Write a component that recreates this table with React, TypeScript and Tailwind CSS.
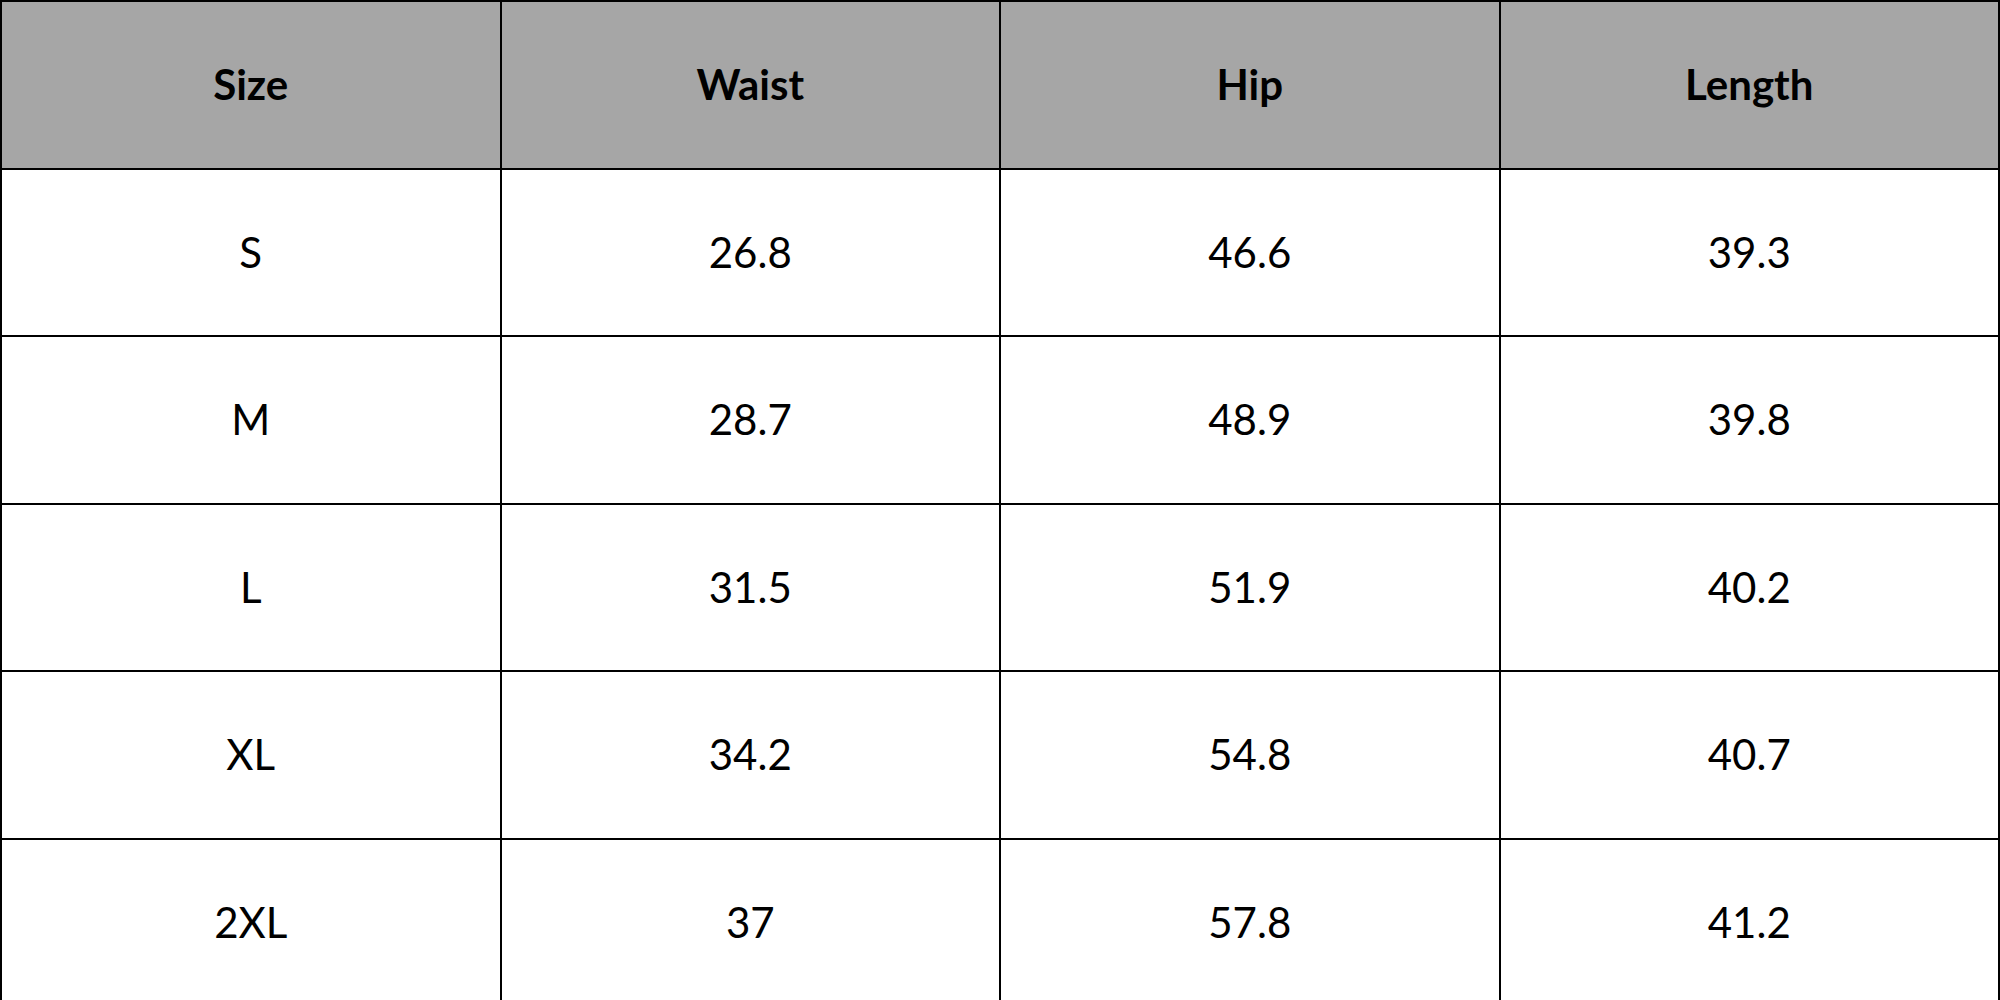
import React from "react";

const headers = ["Size", "Waist", "Hip", "Length"];
const rows = [
  ["S", "26.8", "46.6", "39.3"],
  ["M", "28.7", "48.9", "39.8"],
  ["L", "31.5", "51.9", "40.2"],
  ["XL", "34.2", "54.8", "40.7"],
  ["2XL", "37", "57.8", "41.2"],
];

export default function App() {
  return (
    <div className="w-[2000px] h-[1000px] overflow-hidden bg-white" style={{ fontFamily: "Lato, 'Open Sans', sans-serif" }}>
      <table className="w-[2000px] border-collapse table-fixed">
        <thead>
          <tr className="h-[167.5px] bg-[#a6a6a6]">
            {headers.map((h) => (
              <th key={h} className="border-2 border-black text-center align-middle text-[42px] font-bold text-black">
                {h}
              </th>
            ))}
          </tr>
        </thead>
        <tbody>
          {rows.map((r, i) => (
            <tr key={i} className="h-[167.5px]">
              {r.map((c, j) => (
                <td key={j} className="border-2 border-black text-center align-middle text-[42px] font-normal text-black">
                  {c}
                </td>
              ))}
            </tr>
          ))}
        </tbody>
      </table>
    </div>
  );
}
